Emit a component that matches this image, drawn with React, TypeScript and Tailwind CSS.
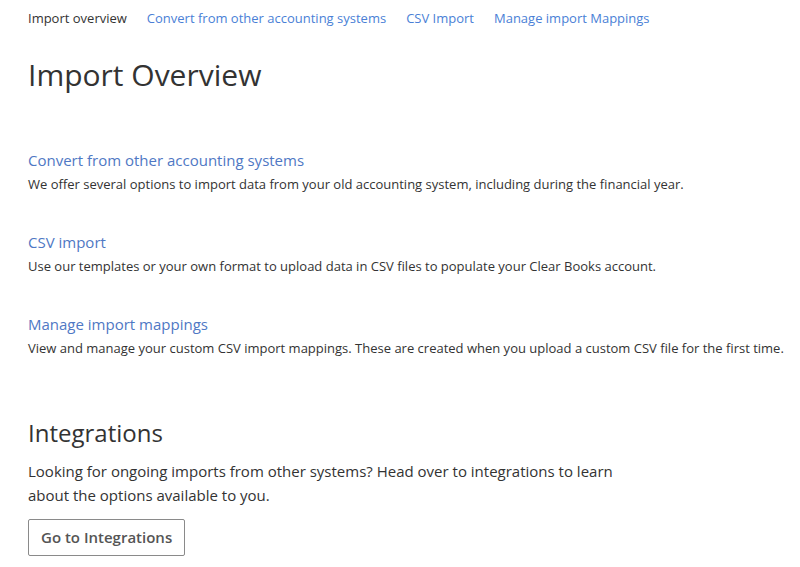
export default function App() {
  const font = { fontFamily: '"Open Sans", sans-serif' };
  return (
    <div className="min-h-[567px] bg-white text-[#333] pl-[28px]" style={font}>
      <nav className="flex gap-[20px] pt-[9px] text-[13px] leading-[18px]">
        <span className="text-[#333]">Import overview</span>
        <a className="text-[#4a7fd6]">Convert from other accounting systems</a>
        <a className="text-[#4a7fd6]">CSV Import</a>
        <a className="text-[#4a7fd6]">Manage import Mappings</a>
      </nav>
      <h1 className="text-[30px] leading-[40px] mt-[28px] text-[#333]">Import Overview</h1>
      <div className="mt-[54px] flex flex-col gap-[36px]">
        <div>
          <a className="block text-[15px] leading-[22px] text-[#4f78c4]">Convert from other accounting systems</a>
          <p className="text-[13px] leading-[22px] mt-[2px] whitespace-nowrap">We offer several options to import data from your old accounting system, including during the financial year.</p>
        </div>
        <div>
          <a className="block text-[15px] leading-[22px] text-[#4f78c4]">CSV import</a>
          <p className="text-[13px] leading-[22px] mt-[2px] whitespace-nowrap">Use our templates or your own format to upload data in CSV files to populate your Clear Books account.</p>
        </div>
        <div>
          <a className="block text-[15px] leading-[22px] text-[#4f78c4]">Manage import mappings</a>
          <p className="text-[13px] leading-[22px] mt-[2px] whitespace-nowrap">View and manage your custom CSV import mappings. These are created when you upload a custom CSV file for the first time.</p>
        </div>
      </div>
      <h2 className="text-[24px] leading-[32px] mt-[58px]">Integrations</h2>
      <p className="text-[15px] leading-[24px] mt-[10px] max-w-[600px]">Looking for ongoing imports from other systems? Head over to integrations to learn about the options available to you.</p>
      <button className="mt-[12px] h-[37px] px-[12px] border border-[#8a8a8a] rounded-[2px] text-[15px] font-semibold text-[#555] bg-white">Go to Integrations</button>
    </div>
  );
}
